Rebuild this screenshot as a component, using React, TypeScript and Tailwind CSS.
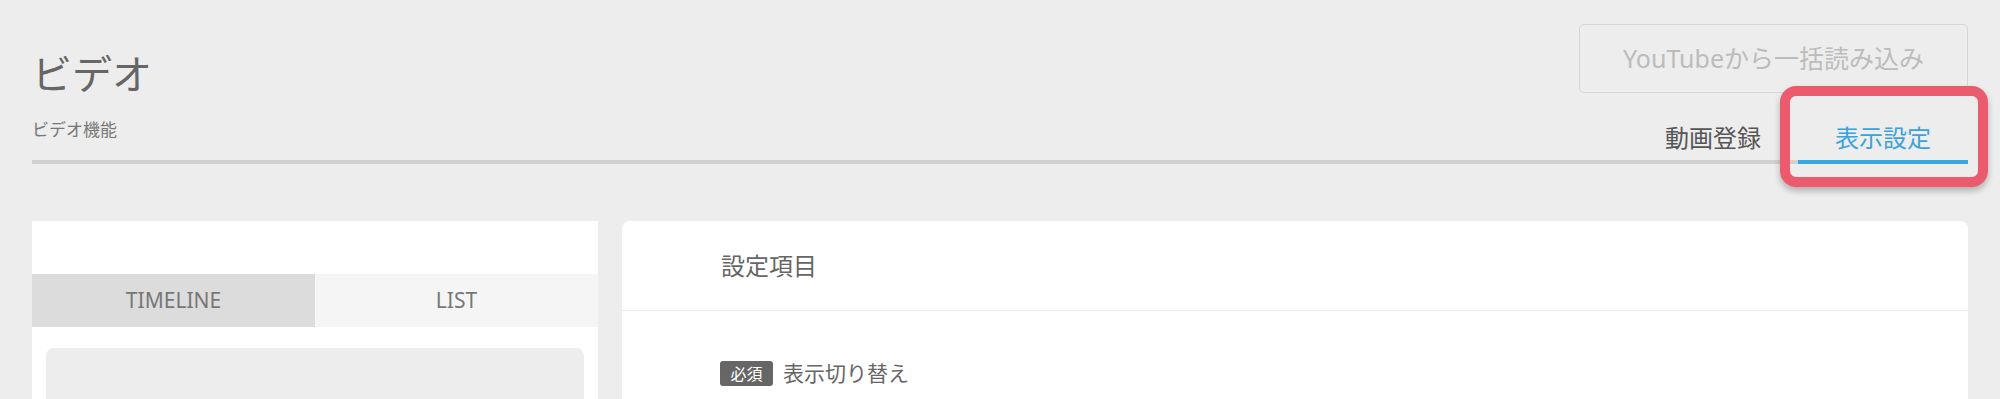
import React from 'react';

const font = "font-['Noto_Sans','Noto_Sans_CJK_JP',sans-serif]";

const Header: React.FC = () => (
  <div className="mx-8 flex items-end justify-between border-b-4 border-[#d0d0d0] pt-6">
    {/* Title */}
    <div className="pb-[22px]">
      <h1 className="pt-[29px] text-[40px] leading-[40px] font-normal text-[#666666]">ビデオ</h1>
      <p className="mt-[27px] text-[17px] leading-[17px] text-[#777777]">ビデオ機能</p>
    </div>

    {/* Actions + tabs */}
    <div className="flex flex-col items-end">
      <button className="h-[69px] w-[389px] rounded-[5px] border border-[#d6d6d6] text-[25px] text-[#bcbcbc]">
        YouTubeから一括読み込み
      </button>
      <div className="mt-[33px] -mb-1 flex">
        <div className="w-[170px] pb-[10px] text-center text-[24px] leading-[24px] text-[#555555] border-b-4 border-transparent">
          動画登録
        </div>
        <div className="relative w-[170px] border-b-4 border-[#39a6de] pb-[10px] text-center text-[24px] leading-[24px] text-[#3ba3db]">
          表示設定
          {/* highlight annotation */}
          <div className="pointer-events-none absolute -left-[18px] -right-[20px] -top-[40px] -bottom-[27px] rounded-[16px] border-[10px] border-[#ec5a6e] shadow-[0_4px_6px_rgba(0,0,0,0.25)]" />
        </div>
      </div>
    </div>
  </div>
);

const LeftPanel: React.FC = () => (
  <div className="w-[566px] shrink-0 bg-white">
    <div className="h-[53px]" />
    <div className="flex h-[53px]">
      <div className="flex flex-1 items-center justify-center bg-[#dcdcdc] text-[21px] text-[#777777]">TIMELINE</div>
      <div className="flex flex-1 items-center justify-center bg-[#f5f5f5] text-[21px] text-[#777777]">LIST</div>
    </div>
    <div className="px-[14px] pt-[21px]">
      <div className="h-[200px] rounded-[8px] bg-[#ededed]" />
    </div>
  </div>
);

const RightPanel: React.FC = () => (
  <div className="flex-1 rounded-t-[8px] bg-white">
    <div className="flex h-[90px] items-center border-b border-[#ebebeb] pl-[99px]">
      <h3 className="text-[24px] leading-[24px] text-[#666666]">設定項目</h3>
    </div>
    <div className="pl-[98px] pt-[50px]">
      <div className="flex items-center gap-[10px]">
        <span className="flex h-[25px] w-[53px] items-center justify-center rounded-[3px] bg-[#666666] text-[16px] text-white">必須</span>
        <span className="text-[21px] leading-[21px] text-[#666666]">表示切り替え</span>
      </div>
    </div>
  </div>
);

const App: React.FC = () => {
  return (
    <div className={`h-[399px] w-full overflow-hidden bg-[#ededed] ${font}`}>
      <Header />
      <div className="mx-8 mt-[57px] flex gap-6 h-[400px]">
        <LeftPanel />
        <RightPanel />
      </div>
    </div>
  );
};

export default App;
